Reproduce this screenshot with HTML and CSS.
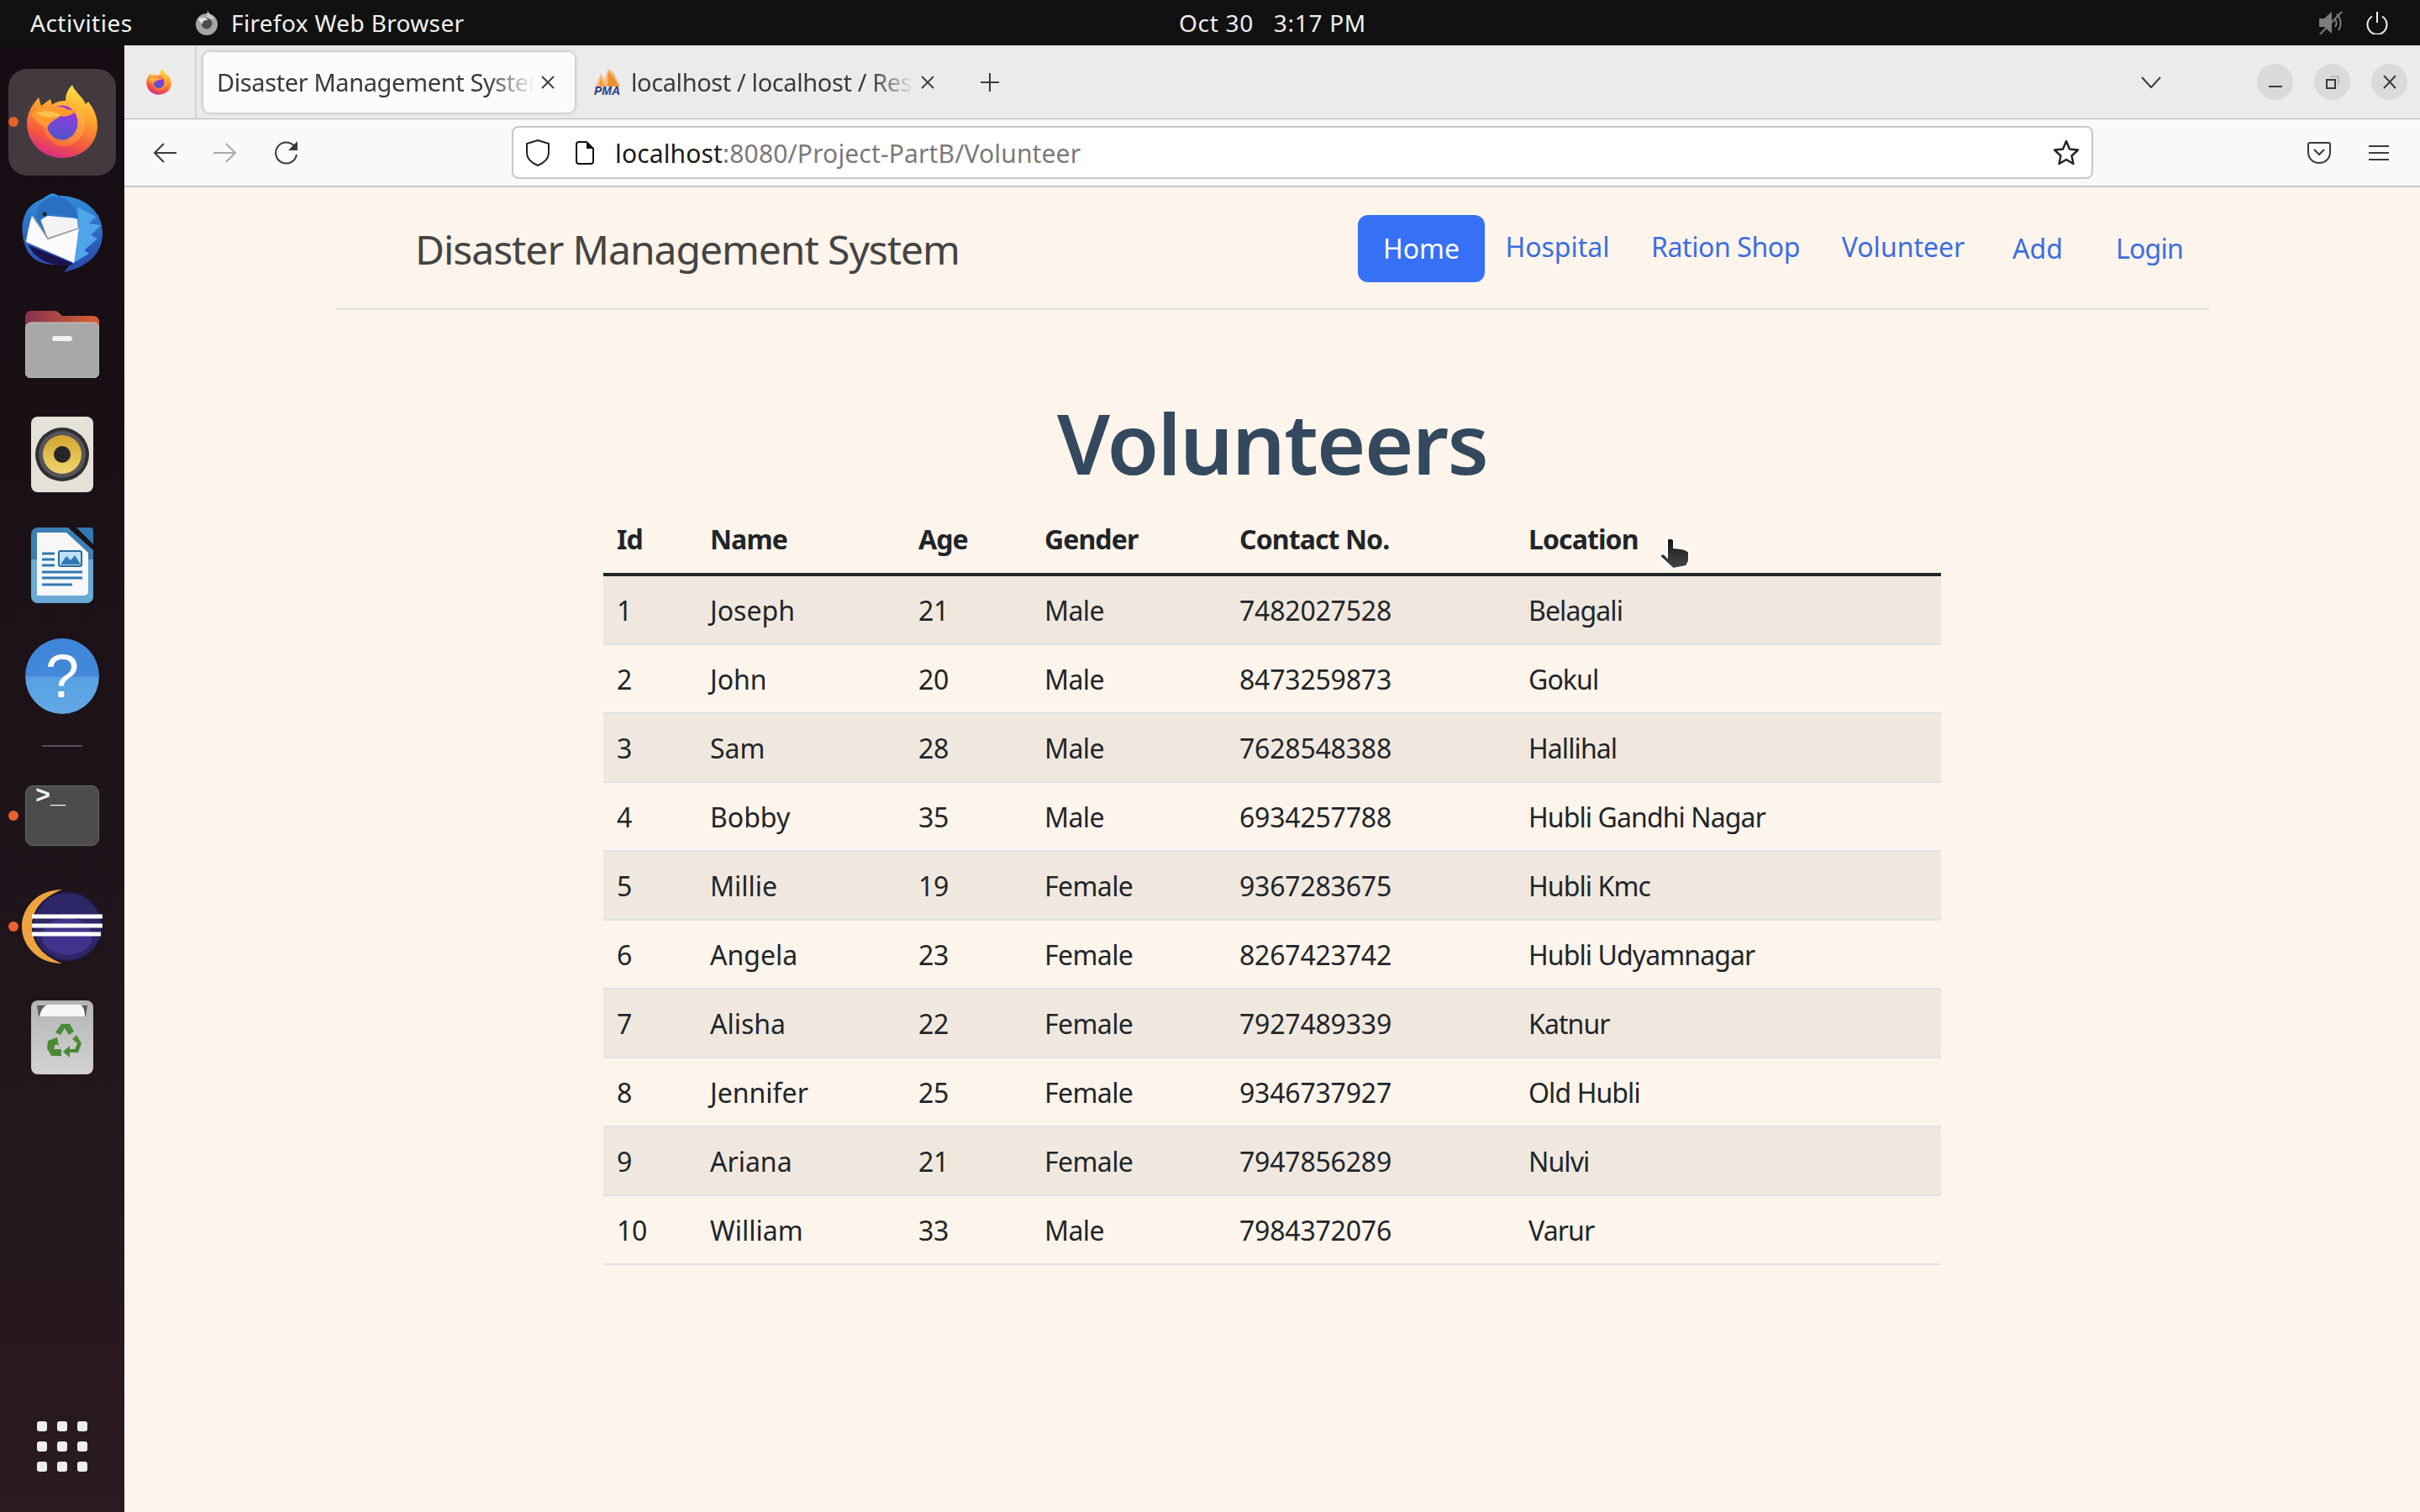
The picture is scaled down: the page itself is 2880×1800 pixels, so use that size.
FILE: index.html
```html
<!DOCTYPE html>
<html lang="en">
<head>
    <meta charset="UTF-8">
    <meta name="viewport" content="width=device-width, initial-scale=1.0">
    <title>Disaster Management System</title>
    <link rel="stylesheet" href="styles.css">
</head>
<body>
    <svg class="defs" width="0" height="0">
        <defs>
            <linearGradient id="fx-body" x1="0.75" y1="0" x2="0.4" y2="1">
                <stop offset="0" stop-color="#ffe84b"/>
                <stop offset="0.4" stop-color="#ffa22c"/>
                <stop offset="0.76" stop-color="#f4563f"/>
                <stop offset="1" stop-color="#d92d83"/>
            </linearGradient>
            <linearGradient id="fx-globe" x1="0.6" y1="0" x2="0.4" y2="1">
                <stop offset="0" stop-color="#a632e4"/>
                <stop offset="1" stop-color="#4a57c8"/>
            </linearGradient>
            <linearGradient id="fx-ring" x1="0.8" y1="0" x2="0.2" y2="1">
                <stop offset="0" stop-color="#ffc23c"/>
                <stop offset="1" stop-color="#f8653a"/>
            </linearGradient>
            <linearGradient id="hand" x1="0.5" y1="0" x2="0.5" y2="1">
                <stop offset="0" stop-color="#151515"/>
                <stop offset="1" stop-color="#484848"/>
            </linearGradient>
            <symbol id="firefox" viewBox="0 0 84 88">
                <path fill="url(#fx-body)" d="M54 0C57 9 66 13 70 23L73 20C82 31 86 44 83 57C79 75 62 87 42 87C18 87 0 68 0 46C0 34 6 24 14 15L17 25L28 17L31 27C36 21 41 19 46 19C46 11 49 5 54 0Z"/>
                <ellipse cx="44" cy="46" rx="25" ry="27" fill="url(#fx-ring)"/>
                <ellipse cx="42" cy="45" rx="18.500" ry="20.500" fill="url(#fx-globe)"/>
                <path fill="#ff9a30" d="M5 36C10 26 24 24 31 27C36 25 44 26 48 29C52 31 56 29 60 30C54 36 46 39 40 37C34 42 26 44 24 52C16 48 10 42 5 36Z"/>
                <path fill="#ffc04e" d="M11 34C18 30 30 30 42 36C34 39 20 40 11 34Z"/>
            </symbol>
        </defs>
    </svg>

    <div class="topbar">
        <div class="topbar-left">
            <span class="activities">Activities</span>
            <span class="app-menu">
                <svg class="app-menu-icon" viewBox="0 0 28 30">
                    <circle cx="14" cy="17" r="13" fill="#a5a5a5"/>
                    <path d="M15 0c1 5 6 6 9 10L14 12z" fill="#c9c9c9"/>
                    <circle cx="14" cy="16" r="6.500" fill="#4c4c4c"/>
                    <path d="M4 10c4-2 9-1 12 2-4 0-7 0-7 5-2-2-4-4-5-7z" fill="#e2e2e2"/>
                </svg>
                Firefox Web Browser
            </span>
        </div>
        <div class="clock">Oct 30 &nbsp; 3:17 PM</div>
        <div class="topbar-right">
            <svg class="mute-icon" viewBox="0 0 28 28">
                <path d="M0 9h6l9-8v26l-9-8H0z" fill="#7c7c7c"/>
                <path d="M18 9c3 3 3 7 1 10M21 4c5 5 6 13 2 19" fill="none" stroke="#7c7c7c" stroke-width="2"/>
                <path d="M1 28L27 1" stroke="#7c7c7c" stroke-width="2"/>
            </svg>
            <svg class="power-icon" viewBox="0 0 26 27">
                <path d="M7 5.500a11.500 11.500 0 1 0 12 0" fill="none" stroke="#f2f2f2" stroke-width="2"/>
                <path d="M13 0v13" stroke="#f2f2f2" stroke-width="2"/>
            </svg>
        </div>
    </div>

    <div class="desktop">
        <nav class="dock">
            <div class="dock-item active">
                <span class="dot"></span>
                <svg class="ic-firefox"><use href="#firefox"/></svg>
            </div>
            <div class="dock-item">
                <svg class="ic-thunderbird" viewBox="0 0 96 94">
                    <defs>
                        <linearGradient id="tb" x1="0.5" y1="0" x2="0.5" y2="1">
                            <stop offset="0" stop-color="#2f8fdc"/>
                            <stop offset="1" stop-color="#2b46a8"/>
                        </linearGradient>
                    </defs>
                    <path fill="url(#tb)" d="M37 0L44 3C72 3 96 20 96 48C96 70 80 88 50 94L58 84C30 88 8 84 2 56C-3 34 4 14 24 7C28 4 32 1 37 0Z"/>
                    <path fill="#1b1350" d="M8 62L62 84C48 90 18 84 8 62Z"/>
                    <path fill="#4fa4ea" d="M66 16L88 28L80 36L94 38L82 50L90 54L74 68L80 72L60 84L68 46Z"/>
                    <path fill="#fbfbfd" d="M12 27L31 55L68 42L62 83L5 58C7 46 9 36 12 27Z"/>
                    <path fill="#f3f3f6" d="M20 26L66 30L67 42L31 54Z"/>
                    <path fill="none" stroke="#9a9a9a" stroke-width="1.500" d="M13 27L31 54L67 42"/>
                    <path fill="#2a6fc2" d="M18 34C15 18 24 5 40 4C54 4 64 14 66 31C50 22 30 22 20 35Z"/>
                    <circle cx="27" cy="25" r="2.500" fill="#222"/>
                </svg>
            </div>
            <div class="dock-item">
                <svg class="ic-files" viewBox="0 0 88 81">
                    <defs>
                        <linearGradient id="folder-tab" x1="0" y1="0" x2="1" y2="0">
                            <stop offset="0" stop-color="#85324f"/>
                            <stop offset="1" stop-color="#d9622e"/>
                        </linearGradient>
                    </defs>
                    <path fill="url(#folder-tab)" d="M0 8a7 7 0 0 1 7-7h28a8 8 0 0 1 6 3l3 3h37a7 7 0 0 1 7 7v20H0z"/>
                    <rect y="15" width="88" height="66" rx="7" fill="#a8a8a8"/>
                    <rect y="15" width="88" height="66" rx="7" fill="none" stroke="#c9c9c9" stroke-width="1"/>
                    <rect x="32" y="31" width="24" height="6" rx="3" fill="#f2f2f2"/>
                </svg>
            </div>
            <div class="dock-item">
                <svg class="ic-square" viewBox="0 0 74 90">
                    <defs>
                        <linearGradient id="cone" x1="0.500" y1="0" x2="0.500" y2="1">
                            <stop offset="0" stop-color="#d2a52f"/>
                            <stop offset="1" stop-color="#f0d66c"/>
                        </linearGradient>
                    </defs>
                    <rect width="74" height="90" rx="8" fill="#e4e1d9"/>
                    <circle cx="37" cy="45" r="32" fill="#2f2f33"/>
                    <circle cx="37" cy="45" r="28" fill="#55555a"/>
                    <circle cx="37" cy="45" r="23" fill="url(#cone)"/>
                    <circle cx="37" cy="45" r="10" fill="#26262a"/>
                </svg>
            </div>
            <div class="dock-item">
                <svg class="ic-square" viewBox="0 0 74 90">
                    <path fill="#3d7fb5" d="M8 0H44L74 27V82a8 8 0 0 1-8 8H8a8 8 0 0 1-8-8V8A8 8 0 0 1 8 0Z"/>
                    <path fill="#69aad6" d="M0 38H74V82a8 8 0 0 1-8 8H8a8 8 0 0 1-8-8Z"/>
                    <path fill="#f7f7f7" d="M7 6H42L68 30V76a5 5 0 0 1-5 5H7z"/>
                    <path fill="#2f78b3" d="M54 0H70a4 4 0 0 1 4 4V20Z"/>
                    <rect x="33" y="28" width="27" height="18" rx="2" fill="#bfe0f7" stroke="#2b6a9e" stroke-width="2"/>
                    <path fill="#2f78b3" d="M35 44L42 34L47 39L52 33L59 44Z"/>
                    <path stroke="#2f78b3" stroke-width="3" d="M13 31H28M13 38H28M13 45H28M13 53H61M13 60H61M13 68H49"/>
                </svg>
            </div>
            <div class="dock-item">
                <svg class="ic-help" viewBox="0 0 88 90">
                    <defs>
                        <linearGradient id="help" x1="0.500" y1="0" x2="0.500" y2="1">
                            <stop offset="0" stop-color="#3f86d8"/>
                            <stop offset="0.500" stop-color="#4588d8"/>
                            <stop offset="0.510" stop-color="#58a0e2"/>
                            <stop offset="1" stop-color="#62a8e4"/>
                        </linearGradient>
                    </defs>
                    <ellipse cx="44" cy="45" rx="44" ry="45" fill="url(#help)"/>
                    <text class="help-mark" x="44" y="70" text-anchor="middle">?</text>
                </svg>
            </div>
            <div class="dock-sep"></div>
            <div class="dock-item">
                <span class="dot"></span>
                <div class="ic-terminal"><span class="prompt">&gt;_</span></div>
            </div>
            <div class="dock-item">
                <span class="dot"></span>
                <svg class="ic-eclipse" viewBox="0 0 96 88">
                    <path fill="#eda33e" d="M48 0C20 0 0 20 0 44S20 88 48 88C32 82 12 68 12 44S32 6 48 0Z"/>
                    <ellipse cx="54" cy="44" rx="42" ry="42" fill="#1d1a44"/>
                    <ellipse cx="54" cy="44" rx="40" ry="40" fill="#2e2767"/>
                    <ellipse cx="54" cy="56" rx="30" ry="22" fill="#40348c"/>
                    <path stroke="#fff" stroke-width="5" d="M12 32H96M12 43H96M12 53H94"/>
                </svg>
            </div>
            <div class="dock-item">
                <svg class="ic-square" viewBox="0 0 74 88">
                    <defs>
                        <linearGradient id="bin" x1="0.500" y1="0" x2="0.500" y2="1">
                            <stop offset="0" stop-color="#b4b4b4"/>
                            <stop offset="1" stop-color="#d2d2d2"/>
                        </linearGradient>
                    </defs>
                    <rect width="74" height="88" rx="8" fill="url(#bin)"/>
                    <path fill="#5c5c5c" d="M7 6H67L65 19H9Z"/>
                    <path fill="#f6f6f6" d="M10 19C12 10 16 5 22 5H58C62 6 64 12 64 19Z"/>
                    <g fill="#4a8a36">
                        <path d="M29 38L36 28H46L51 37L45 41L40 33L35 41Z"/>
                        <path d="M20 48L31 44L33 54L29 52L27 58H36V66H24L19 57Z"/>
                        <path d="M54 41L60 51L56 62H46V68L38 61L46 54V58H52L55 51L49 46Z"/>
                    </g>
                </svg>
            </div>
            <div class="app-grid">
                <i></i><i></i><i></i><i></i><i></i><i></i><i></i><i></i><i></i>
            </div>
        </nav>

        <div class="window">
            <div class="tabbar">
                <div class="tab-view">
                    <svg class="favicon"><use href="#firefox"/></svg>
                </div>
                <div class="tab selected">
                    <span class="tab-title">Disaster Management System</span>
                    <svg class="tab-close" viewBox="0 0 16 16"><path d="M1 1L15 15M15 1L1 15"/></svg>
                </div>
                <div class="tab">
                    <svg class="pma-icon" viewBox="0 0 34 32">
                        <path fill="#f6bd7c" d="M2 21L8 6L12 13L17 0L23 4L31 21Z"/>
                        <path fill="#ec8f32" d="M16 21L17 4L22 8L30 21Z"/>
                        <path fill="#f29a3e" d="M6 21L8 10L12 21Z"/>
                        <text class="pma-text" x="0" y="31">PMA</text>
                    </svg>
                    <span class="tab-title">localhost / localhost / Resources</span>
                    <svg class="tab-close" viewBox="0 0 16 16"><path d="M1 1L15 15M15 1L1 15"/></svg>
                </div>
                <svg class="new-tab" viewBox="0 0 24 24"><path d="M12 1V23M1 12H23"/></svg>
                <svg class="all-tabs" viewBox="0 0 24 14"><path d="M1 1L12 13L23 1"/></svg>
                <div class="win-buttons">
                    <span class="win-btn">
                        <svg viewBox="0 0 16 16"><path d="M0 13H16" stroke-width="2"/></svg>
                    </span>
                    <span class="win-btn">
                        <svg viewBox="0 0 16 16"><rect x="1" y="5" width="10" height="10" stroke-width="2"/><path d="M5 1H15V11" stroke="#999" stroke-width="1"/></svg>
                    </span>
                    <span class="win-btn">
                        <svg viewBox="0 0 16 16"><path d="M1 0L15 15M15 0L1 15" stroke-width="2"/></svg>
                    </span>
                </div>
            </div>

            <div class="toolbar">
                <svg class="tool-icon back" viewBox="0 0 28 24"><path d="M13 1L2 12L13 23M2 12H28"/></svg>
                <svg class="tool-icon forward" viewBox="0 0 28 24"><path d="M15 1L26 12L15 23M26 12H0"/></svg>
                <svg class="tool-icon reload" viewBox="0 0 30 28">
                    <path d="M25 7A12.500 12.500 0 1 0 27 16"/>
                    <path class="solid" d="M28 0V11H17Z"/>
                </svg>
                <div class="urlbar">
                    <svg class="shield" viewBox="0 0 28 32"><path d="M14 1L27 5V16C27 23 21 28 14 31C7 28 1 23 1 16V5Z"/></svg>
                    <svg class="page-icon" viewBox="0 0 22 28"><path d="M4 1H13L21 9V24a3 3 0 0 1-3 3H4a3 3 0 0 1-3-3V4a3 3 0 0 1 3-3Z"/><path class="solid" d="M13 1L21 9H13Z"/></svg>
                    <span class="url"><span class="url-host">localhost</span>:8080/Project-PartB/Volunteer</span>
                    <svg class="star" viewBox="0 0 32 31"><path d="M16 2L20 11.500L30 12.500L22.500 19.500L24.500 29L16 24L7.500 29L9.500 19.500L2 12.500L12 11.500Z"/></svg>
                </div>
                <svg class="pocket" viewBox="0 0 28 26">
                    <path d="M3 1H25a2 2 0 0 1 2 2V12C27 20 21 25 14 25S1 20 1 12V3A2 2 0 0 1 3 1Z"/>
                    <path d="M8 9L14 15L20 9"/>
                </svg>
                <svg class="hamburger" viewBox="0 0 24 20"><path d="M0 2H24M0 10H24M0 18H24"/></svg>
            </div>

            <main class="page">
                <div class="container">
                    <header class="site-header">
                        <a class="brand">Disaster Management System</a>
                        <ul class="nav">
                            <li class="nav-item home"><a class="nav-link active">Home</a></li>
                            <li class="nav-item hospital"><a class="nav-link raised">Hospital</a></li>
                            <li class="nav-item ration"><a class="nav-link raised">Ration Shop</a></li>
                            <li class="nav-item volunteer"><a class="nav-link raised">Volunteer</a></li>
                            <li class="nav-item add"><a class="nav-link">Add</a></li>
                            <li class="nav-item login"><a class="nav-link">Login</a></li>
                        </ul>
                    </header>
                </div>

                <h1 class="page-title">Volunteers</h1>

                <div class="table-wrap">
                    <table class="table">
                        <colgroup>
                            <col class="c-id"><col class="c-name"><col class="c-age"><col class="c-gender"><col class="c-contact"><col class="c-location">
                        </colgroup>
                        <thead>
                            <tr><th>Id</th><th>Name</th><th>Age</th><th>Gender</th><th>Contact No.</th><th>Location</th></tr>
                        </thead>
                        <tbody>
                            <tr><td>1</td><td>Joseph</td><td>21</td><td>Male</td><td>7482027528</td><td>Belagali</td></tr>
                            <tr><td>2</td><td>John</td><td>20</td><td>Male</td><td>8473259873</td><td>Gokul</td></tr>
                            <tr><td>3</td><td>Sam</td><td>28</td><td>Male</td><td>7628548388</td><td>Hallihal</td></tr>
                            <tr><td>4</td><td>Bobby</td><td>35</td><td>Male</td><td>6934257788</td><td>Hubli Gandhi Nagar</td></tr>
                            <tr><td>5</td><td>Millie</td><td>19</td><td>Female</td><td>9367283675</td><td>Hubli Kmc</td></tr>
                            <tr><td>6</td><td>Angela</td><td>23</td><td>Female</td><td>8267423742</td><td>Hubli Udyamnagar</td></tr>
                            <tr><td>7</td><td>Alisha</td><td>22</td><td>Female</td><td>7927489339</td><td>Katnur</td></tr>
                            <tr><td>8</td><td>Jennifer</td><td>25</td><td>Female</td><td>9346737927</td><td>Old Hubli</td></tr>
                            <tr><td>9</td><td>Ariana</td><td>21</td><td>Female</td><td>7947856289</td><td>Nulvi</td></tr>
                            <tr><td>10</td><td>William</td><td>33</td><td>Male</td><td>7984372076</td><td>Varur</td></tr>
                        </tbody>
                    </table>
                    <svg class="cursor" viewBox="0 0 36 38">
                        <path d="M9 3C9 0 16 0 17 3V12L22 12.500L26 13L30 14L35 17V28L32 34L16 37L1 23C0 21 3 18 6 20L9 23Z"/>
                    </svg>
                </div>
            </main>
        </div>
    </div>
</body>
</html>
```

FILE: styles.css
```css
* {
    box-sizing: border-box;
}
html, body {
    margin: 0;
    padding: 0;
    height: 1800px;
    overflow: hidden;
}
body {
    font-family: "Noto Sans", "Open Sans", sans-serif;
    background: #111;
    color: #212529;
}
.defs {
    position: absolute;
}
svg {
    display: block;
    flex: none;
}

/* gnome top bar */
.topbar {
    height: 54px;
    background: #111;
    color: #f0f0f0;
    font-size: 28px;
    display: flex;
    align-items: center;
    justify-content: space-between;
    position: relative;
}
.topbar-left {
    display: flex;
    align-items: center;
    padding-left: 36px;
}
.activities {
    width: 196px;
    letter-spacing: 0.5px;
}
.app-menu {
    display: flex;
    align-items: center;
    gap: 15px;
    letter-spacing: 0.35px;
}
.app-menu-icon {
    width: 28px;
    height: 30px;
}
.clock {
    position: absolute;
    left: 1403px;
    letter-spacing: 0.7px;
}
.topbar-right {
    display: flex;
    align-items: center;
    gap: 28px;
    padding-right: 38px;
}
.mute-icon {
    width: 28px;
    height: 28px;
}
.power-icon {
    width: 26px;
    height: 27px;
}

.desktop {
    display: flex;
    height: 1746px;
}

/* dock */
.dock {
    width: 148px;
    background: linear-gradient(180deg, #150d13 0%, #1d1319 50%, #2a1a21 100%);
    display: flex;
    flex-direction: column;
    align-items: center;
    padding-top: 25px;
}
.dock-item {
    height: 132px;
    width: 148px;
    flex: none;
    display: flex;
    align-items: center;
    justify-content: center;
    position: relative;
}
.dock-item.active::before {
    content: "";
    position: absolute;
    left: 10px;
    top: 3px;
    width: 128px;
    height: 127px;
    background: #433a40;
    border-radius: 22px;
}
.dock-item svg,
.ic-terminal {
    position: relative;
}
.dot {
    position: absolute;
    left: 10px;
    top: 60px;
    width: 12px;
    height: 12px;
    border-radius: 50%;
    background: #e6622f;
    z-index: 1;
}
.ic-firefox {
    width: 84px;
    height: 88px;
}
.ic-thunderbird {
    width: 96px;
    height: 94px;
}
.ic-files {
    width: 88px;
    height: 81px;
}
.ic-square {
    width: 74px;
    height: 90px;
}
.ic-help {
    width: 88px;
    height: 90px;
}
.help-mark {
    font-family: "Liberation Sans", sans-serif;
    font-size: 72px;
    fill: #fff;
}
.dock-sep {
    width: 48px;
    height: 2px;
    background: #5a5158;
    margin: 16px 0;
    flex: none;
}
.ic-terminal {
    width: 88px;
    height: 72px;
    background: #4c4c4c;
    border: 1px solid #666;
    border-radius: 9px;
}
.prompt {
    position: absolute;
    left: 11px;
    top: -5px;
    color: #f2f2f2;
    font-family: "Liberation Mono", monospace;
    font-size: 30px;
    font-weight: bold;
}
.ic-eclipse {
    width: 96px;
    height: 88px;
}
.app-grid {
    margin-top: auto;
    margin-bottom: 48px;
    display: grid;
    grid-template-columns: repeat(3, 12px);
    grid-auto-rows: 12px;
    gap: 12px;
}
.app-grid i {
    background: #eeeeee;
    border-radius: 3px;
}

.window {
    flex: 1;
    display: flex;
    flex-direction: column;
    min-width: 0;
}

/* firefox tabs */
.tabbar {
    height: 88px;
    background: #ebebeb;
    border-bottom: 1px solid #b4b4b4;
    display: flex;
    align-items: center;
    position: relative;
    color: #3a3a3a;
}
.tab-view {
    width: 86px;
    height: 87px;
    border-right: 2px solid #d4d4d4;
    display: flex;
    align-items: center;
    justify-content: center;
    padding-right: 2px;
}
.favicon {
    width: 30px;
    height: 31px;
}
.tab {
    height: 72px;
    display: flex;
    align-items: center;
    font-size: 29px;
}
.tab.selected {
    width: 442px;
    margin-left: 8px;
    padding: 0 24px 0 16px;
    background: #fbfbfb;
    border-radius: 8px;
    box-shadow: 0 0 5px rgba(0, 0, 0, 0.3);
}
.tab:not(.selected) {
    width: 428px;
    padding-left: 23px;
    padding-right: 0;
}
.tab-title {
    flex: 1;
    min-width: 0;
    white-space: nowrap;
    overflow: hidden;
    letter-spacing: -0.4px;
    -webkit-mask-image: linear-gradient(90deg, #000 85%, transparent 100%);
    mask-image: linear-gradient(90deg, #000 85%, transparent 100%);
}
.tab-close {
    width: 16px;
    height: 16px;
    margin-left: 8px;
    fill: none;
    stroke: #3a3a3a;
    stroke-width: 1.800;
}
.pma-icon {
    width: 34px;
    height: 32px;
    margin-right: 10px;
}
.pma-text {
    font-family: "Liberation Sans", sans-serif;
    font-size: 14px;
    font-weight: bold;
    font-style: italic;
    fill: #2a3a80;
}
.new-tab {
    width: 24px;
    height: 24px;
    margin-left: 54px;
    fill: none;
    stroke: #3a3a3a;
    stroke-width: 2;
}
.all-tabs {
    position: absolute;
    left: 2400px;
    top: 37px;
    width: 24px;
    height: 14px;
    fill: none;
    stroke: #3a3a3a;
    stroke-width: 2;
}
.win-buttons {
    margin-left: auto;
    display: flex;
    gap: 25px;
    padding-right: 15px;
}
.win-btn {
    width: 43px;
    height: 43px;
    border-radius: 50%;
    background: #dadada;
    display: flex;
    align-items: center;
    justify-content: center;
}
.win-btn svg {
    width: 16px;
    height: 16px;
    fill: none;
    stroke: #3a3a3a;
}

/* firefox toolbar */
.toolbar {
    height: 81px;
    background: #f9f9fb;
    border-bottom: 2px solid #c8c8c8;
    display: flex;
    align-items: center;
    position: relative;
}
.tool-icon {
    fill: none;
    stroke: #3a3a3a;
    stroke-width: 2;
}
.tool-icon .solid {
    fill: #3a3a3a;
    stroke: none;
}
.back {
    width: 28px;
    height: 24px;
    margin-left: 34px;
}
.forward {
    width: 28px;
    height: 24px;
    margin-left: 44px;
    stroke: #aaaaaa;
}
.reload {
    width: 30px;
    height: 28px;
    margin-left: 44px;
}
.urlbar {
    width: 1882px;
    height: 63px;
    margin-left: 253px;
    background: #fff;
    border: 2px solid #c8c8c8;
    border-radius: 8px;
    display: flex;
    align-items: center;
    padding-left: 15px;
    font-size: 30px;
    color: #7a7a7a;
}
.shield {
    width: 28px;
    height: 32px;
    fill: none;
    stroke: #222;
    stroke-width: 2;
}
.page-icon {
    width: 22px;
    height: 28px;
    margin-left: 31px;
    fill: none;
    stroke: #111;
    stroke-width: 2;
}
.page-icon .solid {
    fill: #111;
    stroke: none;
}
.url {
    margin-left: 25px;
    letter-spacing: 0.15px;
    padding-top: 1px;
}
.url-host {
    color: #1a1a1a;
}
.star {
    width: 32px;
    height: 31px;
    margin-left: auto;
    margin-right: 14px;
    fill: none;
    stroke: #222;
    stroke-width: 2.400;
    stroke-linejoin: round;
}
.pocket {
    width: 28px;
    height: 26px;
    margin-left: 255px;
    fill: none;
    stroke: #3a3a3a;
    stroke-width: 2;
}
.hamburger {
    width: 24px;
    height: 20px;
    margin-left: 45px;
    fill: none;
    stroke: #3a3a3a;
    stroke-width: 2;
}

/* page */
.page {
    flex: 1;
    background: #fdf4eb;
    overflow: hidden;
}
.container {
    width: 2230px;
    margin: 0 auto;
}
.site-header {
    display: flex;
    align-items: center;
    justify-content: space-between;
    padding: 33px 0 31px 95px;
    border-bottom: 2px solid #dee2e6;
}
.brand {
    font-size: 48px;
    color: #444;
    letter-spacing: -1.05px;
}
.nav {
    display: flex;
    list-style: none;
    margin: 0;
    padding: 0;
    font-size: 32px;
    align-items: center;
    text-align: center;
}
.home { width: 151px; }
.hospital { width: 173px; }
.ration { width: 227px; letter-spacing: -0.4px; }
.volunteer { width: 196px; }
.add { width: 124px; }
.login { width: 142px; letter-spacing: -0.8px; }
.nav-link {
    display: block;
    padding: 16px 0;
    line-height: 48px;
    color: #3b6ee0;
}
.nav-link.active {
    background: #3570f5;
    color: #fff;
    border-radius: 12px;
}
.nav-link.raised {
    padding: 14px 0 18px;
}

.page-title {
    margin: 97px 0 0;
    text-align: center;
    font-size: 100px;
    line-height: 120px;
    font-weight: 600;
    letter-spacing: -1.7px;
    color: #34495e;
}
.table-wrap {
    width: 1592px;
    margin: 0 auto;
    position: relative;
}
.table {
    width: 100%;
    margin-top: 16px;
    border-collapse: collapse;
    table-layout: fixed;
    font-size: 32px;
    line-height: 48px;
}
.c-id { width: 111px; }
.c-name { width: 248px; }
.c-age { width: 150px; }
.c-gender { width: 232px; }
.c-contact { width: 344px; }
.c-location { width: 507px; }
th, td {
    padding: 16px;
    text-align: left;
    white-space: nowrap;
}
th {
    font-weight: 700;
    letter-spacing: -0.9px;
    border-bottom: 4px solid #212529;
}
td {
    border-bottom: 2px solid #dee2e6;
    padding-bottom: 15px;
    padding-top: 17px;
    letter-spacing: -0.2px;
}
td:nth-child(2) {
    letter-spacing: 0;
}
td:nth-child(4) {
    letter-spacing: -0.6px;
}
td:nth-child(6) {
    letter-spacing: -0.9px;
}
tbody tr:nth-child(odd) td {
    background: #f0e8df;
}
.cursor {
    position: absolute;
    left: 1257px;
    top: 38px;
    width: 36px;
    height: 38px;
    fill: url(#hand);
    stroke: #fff;
    stroke-width: 2;
}
```
